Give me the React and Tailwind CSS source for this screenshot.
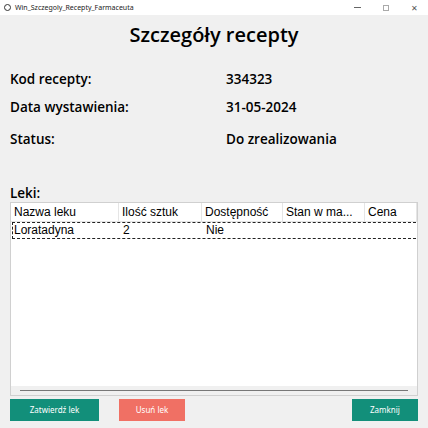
import React from 'react';

const columns = [
  { name: 'Nazwa leku', w: 'w-[108px]' },
  { name: 'Ilość sztuk', w: 'w-[83px]' },
  { name: 'Dostępność', w: 'w-[81px]' },
  { name: 'Stan w ma...', w: 'w-[82px]' },
  { name: 'Cena', w: 'flex-1' },
];

const rows = [['Loratadyna', '2', 'Nie', '', '']];

export default function App() {
  return (
    <div className="w-[428px] h-[428px] bg-[#f0f0f0] flex flex-col overflow-hidden font-['Open_Sans',sans-serif] text-black">
      {/* pasek tytułu */}
      <div className="h-[15px] bg-white flex items-center justify-between shrink-0">
        <div className="flex items-center gap-[4px] pl-[4px]">
          <div className="w-[7px] h-[7px] rounded-full border-[1.5px] border-[#333]" />
          <span className="text-[7px] leading-none text-[#222] font-['Noto_Sans',sans-serif]">Win_Szczegoly_Recepty_Farmaceuta</span>
        </div>
        <div className="flex items-center gap-[22px] pr-[10px] text-[#555]">
          <span className="w-[7px] h-px bg-[#666]" />
          <span className="w-[6px] h-[6px] border border-[#aaa]" />
          <span className="text-[8px] leading-none">✕</span>
        </div>
      </div>

      <div className="flex flex-col flex-1 px-[10px]">
        <h1 className="text-center text-[20px] font-semibold leading-none mt-[10px] h-[24px]">Szczegóły recepty</h1>

        <div className="flex flex-col mt-[24px] text-[13.5px] font-semibold leading-none">
          <div className="flex h-[28px] items-start">
            <span className="w-[216px]">Kod recepty:</span>
            <span>334323</span>
          </div>
          <div className="flex h-[32px] items-start">
            <span className="w-[216px]">Data wystawienia:</span>
            <span>31-05-2024</span>
          </div>
          <div className="flex h-[54px] items-start">
            <span className="w-[216px]">Status:</span>
            <span>Do zrealizowania</span>
          </div>
        </div>

        <div className="text-[13.5px] font-semibold leading-none">Leki:</div>

        {/* tabela */}
        <div className="mt-[1px] h-[194px] bg-white border border-[#d0d0d0] flex flex-col font-['Liberation_Sans',sans-serif] text-[12px]">
          <div className="flex h-[19px] border-b border-[#e5e5e5]">
            {columns.map((c) => (
              <div key={c.name} className={`${c.w} border-r border-[#e5e5e5] pl-[3px] flex items-center`}>
                {c.name}
              </div>
            ))}
          </div>
          {rows.map((r, i) => (
            <div key={i} className="flex h-[17px] mx-[1px] border-y border-l border-dashed border-[#222]">
              {r.map((v, j) => (
                <div key={j} className={`${columns[j].w} ${j === 0 ? 'pl-[1px]' : 'pl-[2px]'} flex items-center`}>
                  {v}
                </div>
              ))}
            </div>
          ))}
          <div className="flex-1" />
          <div className="h-[9px] bg-[#f0f0f0] flex items-center px-[9px]">
            <div className="flex-1 h-px bg-[#777]" />
          </div>
        </div>

        <div className="flex justify-between items-center mt-[3px] text-[8px] text-white font-['Noto_Sans',sans-serif]">
          <div className="flex gap-[20px]">
            <button className="w-[89px] h-[22px] bg-[#128f7a]">Zatwierdź lek</button>
            <button className="w-[66px] h-[22px] bg-[#f07064]">Usuń lek</button>
          </div>
          <button className="w-[66px] h-[22px] bg-[#128f7a]">Zamknij</button>
        </div>
      </div>
    </div>
  );
}
